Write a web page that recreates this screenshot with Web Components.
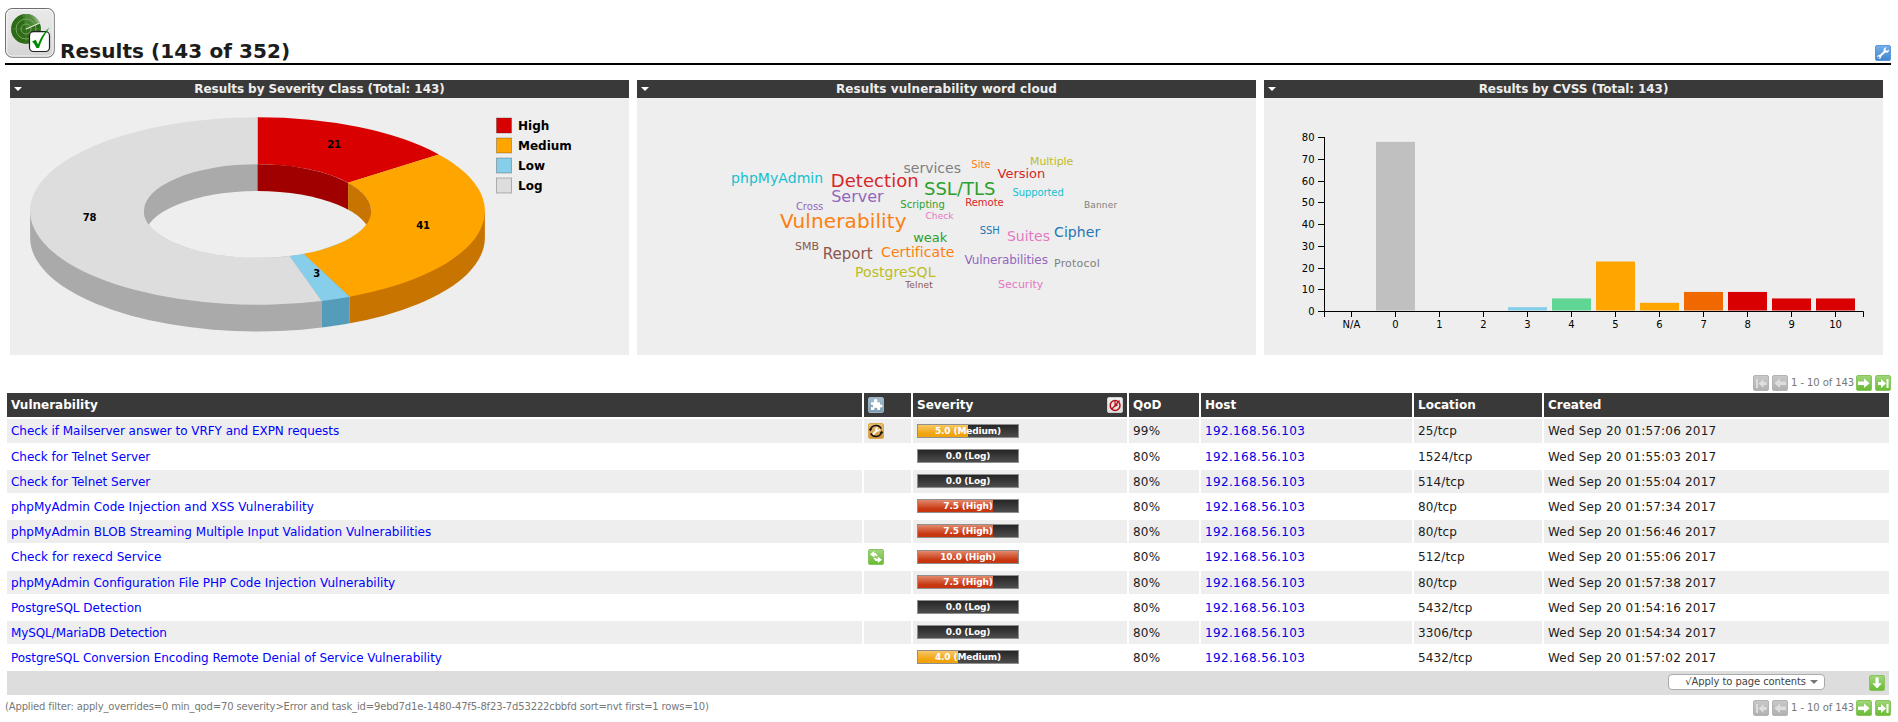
<!DOCTYPE html>
<html lang="en">
<head>
<meta charset="utf-8">
<title>Results</title>
<style>
html,body{margin:0;background:#fff}
body{width:1898px;height:722px;overflow:hidden;font-family:"DejaVu Sans",sans-serif;font-size:12px;color:#1c1c1c}
</style>
</head>
<body>
<results-page></results-page>
<script>
function define(name, render){
  customElements.define(name, class extends HTMLElement{
    connectedCallback(){
      if(this.shadowRoot) return;
      this.attachShadow({mode:'open'}).innerHTML = render(this);
    }
  });
}

/* ---- icons ---- */
const box = (a,b,s,inner) => `<defs><linearGradient id="g" x1="0" y1="0" x2="0" y2="1"><stop offset="0" stop-color="${a}"/><stop offset="1" stop-color="${b}"/></linearGradient></defs><rect x=".5" y=".5" width="15" height="15" rx="1.5" fill="url(#g)" stroke="${s}"/>${inner}`;
const green = i => box('#a2d67c','#68bb33','#86c65c',i);
const grey = i => box('#c9c9c9','#b0b0b0','#b4b4b4',i);
const right = 'M2 6.5H8V3.5L13.6 8.3 8 13V10H2Z';
const ICONS = {
  first: grey('<path d="M3 4h2v9H3zM13.5 7v3H10.5v3L5.5 8.5l5-4.6V7z" fill="#dedede"/>'),
  prev: grey('<path d="M14 6.5H8V3.5L2.4 8.3 8 13V10H14Z" fill="#dedede"/>'),
  next: green(`<path d="${right}" fill="#fff"/>`),
  last: green('<path d="M11.5 4h2v9h-2zM3 7v3h3v3l5-4.5-5-4.6V7z" fill="#fff"/>'),
  down: green('<path d="M6.5 2.5h3.2V8.3h3L8.1 13.6 3.4 8.3h3.1Z" fill="#fff"/>'),
  wrench: box('#78b0ea','#3f83d0','#5c97db','<path d="M4.800 11.300 10.600 5.800" stroke="#fff" stroke-width="1.900"/><path d="M14 4.500 11.900 6 10.300 4.400 11.500 2.200A3 3 0 0 0 8.600 4.900 2.500 2.500 0 0 0 11.300 7.700 3 3 0 0 0 14 4.500Z" fill="#fff"/><circle cx="4.300" cy="11.700" r="2" fill="#fff"/><path d="M2.400 13.600l1.900-1.900" stroke="#4a8bd4" stroke-width="1.300"/>'),
  puzzle: box('#a3bccd','#7e9db2','#9ab2c2','<path d="M3 5.2h3.2C5.3 3.2 6.3 2 7.6 2s2.5 1.2 1.5 3.2H12v2.6c1.700-.8 2.500.2 2.500 1.200s-.9 1.900-2.500 1.200V13H9.200c.6-1.700-.4-2.300-1.400-2.300S5.800 11.500 6.300 13H3v-2.900C5 10.600 5.200 9.800 5.200 9S4.500 7.600 3 8Z" fill="#fff"/>'),
  override: box('#f2f2f2','#dcdcdc','#d0d0d0','<circle cx="8.100" cy="8.500" r="4.900" fill="none" stroke="#b5121b" stroke-width="1.500"/><path d="M8 3.500V9M12.500 3.500 5 12M8.300 9.200l2.400-1.500" stroke="#b5121b" stroke-width="1.200" fill="none"/>'),
  vendorfix: box('#e8bd72','#d2963c','#dba852','<path d="M2.500 6.500A5.900 5.900 0 0 1 13.300 5.700M13.500 9.500A5.900 5.900 0 0 1 2.700 10.300" fill="none" stroke="#111" stroke-width="1.500"/><path d="M.8 5.800h3.600L2.200 8.600zM15.200 10.200h-3.600l2.200-2.800z" fill="#111"/><path d="M5 11.500 8.700 7.300" stroke="#fff" stroke-width="1.900"/><path d="M11.900 5.700 10.400 7 9 5.800l1.300-1.700A2.400 2.400 0 0 0 7.300 6a2.200 2.200 0 0 0 2.200 2.600 2.400 2.400 0 0 0 2.400-2.900Z" fill="#fff"/>'),
  mitigate: green('<path d="M2 5.300 6.300 2v2.200h1.500L9.600 6.400 8.600 7.600 7.200 6.500H6.300V8.500ZM14 10.800 9.800 14v-2H7.800L5.600 9.600 6.800 8.500 8.500 9.700H9.800V7.600Z" fill="#fff"/>')
};
define('gsa-icon', el => `<style>:host{display:block;width:16px;height:16px;flex:none}svg{display:block}</style><svg width="16" height="16" viewBox="0 0 16 16">${ICONS[el.getAttribute('name')]}</svg>`);

define('results-logo', () => `<style>:host{display:block;width:50px;height:50px;flex:none}svg{display:block}</style>
<svg width="50" height="50" viewBox="0 0 50 50"><defs>
<linearGradient id="b" x1="0" y1="0" x2="0" y2="1"><stop offset="0" stop-color="#e9e9e9"/><stop offset=".5" stop-color="#e3e3e3"/><stop offset="1" stop-color="#d2d2d2"/></linearGradient>
<linearGradient id="s" x1=".2" y1=".6" x2="1" y2=".2"><stop offset="0" stop-color="#3a7a22"/><stop offset=".55" stop-color="#5c9246"/><stop offset="1" stop-color="#cfe0c6"/></linearGradient></defs>
<rect x=".6" y=".6" width="48.600" height="48.600" rx="6.500" fill="url(#b)" stroke="#606060"/>
<rect x="1.700" y="1.700" width="46.400" height="46.400" rx="5.500" fill="none" stroke="#fafafa"/>
<circle cx="21" cy="21" r="15" fill="#2e6b17"/>
<path d="M21 21 17 6.600A15 15 0 0 1 34.800 15Z" fill="url(#s)"/>
<g fill="none" stroke="#86b072" stroke-width=".8"><circle cx="21" cy="21" r="5"/><circle cx="21" cy="21" r="10"/><path d="M6 21h30M21 6v30" stroke-opacity=".35"/></g>
<path d="M21 21 34.800 15" stroke="#dceacf" stroke-width="1.200"/>
<rect x="24.500" y="23.700" width="20" height="19.800" rx="4" fill="#fff" stroke="#222" stroke-width="1.200"/>
<path d="M27 33.500 30.800 31.800 33 36.500C36 29 39 24 44.500 19.500 40 26 36 33 34 40H31.500C30 37 29 35 27 33.500Z" fill="#008a00"/></svg>`);

/* ---- dashboard ---- */
define('dash-panel', el => `<style>
:host{display:block;width:619px;background:#eee}
header{display:flex;align-items:center;height:18px;background:#393939;color:#eee;font-weight:bold;line-height:14px}
i{width:0;border:4.500px solid transparent;border-top-color:#fff;border-bottom:0;margin:0 0 0 4px}
b{flex:1;text-align:center;margin-right:12px;position:relative;top:-.5px;letter-spacing:${el.getAttribute('track')}px}
.c{height:257px}</style>
<header><i></i><b>${el.getAttribute('heading')}</b></header><div class="c"><slot></slot></div>`);

define('severity-donut', () => {
  const cx=247.5, cy=113, RX=227.400, RY=93.700, rx=113.600, ry=46.800, H=26.800, T=143;
  const pt=(v,a,b)=>{const t=v/T*2*Math.PI;return (cx+a*Math.sin(t)).toFixed(2)+' '+(cy-b*Math.cos(t)).toFixed(2)};
  const data=[[0,21,'#d80000'],[21,62,'#ffa500'],[62,65,'#87ceeb'],[65,143,'#ddd']];
  const faces=data.map(([s,e,c])=>{const L=(e-s)/T>.5?1:0;
    return `<path fill="${c}" d="M${pt(s,RX,RY)}A${RX} ${RY} 0 ${L} 1 ${pt(e,RX,RY)}L${pt(e,rx,ry)}A${rx} ${ry} 0 ${L} 0 ${pt(s,rx,ry)}Z"/>`}).join('');
  const X=(v,a)=>cx+a*Math.sin(v/T*2*Math.PI);
  const m=X(62,RX), l=X(65,RX), h=X(21,rx);
  return `<style>:host{display:block}svg{display:block}text{font-family:"DejaVu Sans",sans-serif;font-weight:bold;fill:#000}.v{font-size:10px;text-anchor:middle;letter-spacing:-.3px}.l{font-size:12px}</style>
<svg width="619" height="257"><defs>
<clipPath id="o"><path d="M${cx-RX} ${cy}V${cy+H}A${RX} ${RY} 0 0 0 ${cx+RX} ${cy+H}V${cy}Z"/></clipPath>
<clipPath id="i"><ellipse cx="${cx}" cy="${cy}" rx="${rx}" ry="${ry}"/></clipPath></defs>
<g clip-path="url(#o)"><rect x="0" y="90" width="${l}" height="167" fill="#aaa"/><rect x="${l}" y="90" width="${m-l}" height="167" fill="#549cb9"/><rect x="${m}" y="90" width="200" height="167" fill="#c87400"/></g>
${faces}
<g clip-path="url(#i)"><rect x="100" y="50" width="${cx-100}" height="77" fill="#aaa"/><rect x="${cx}" y="50" width="${h-cx}" height="70" fill="#a00000"/><rect x="${h}" y="50" width="60" height="77" fill="#c87400"/><ellipse cx="${cx}" cy="${cy+H}" rx="${rx}" ry="${ry}" fill="#eee"/></g>
<text class="v" x="324" y="50">21</text><text class="v" x="413" y="131">41</text><text class="v" x="306.500" y="179">3</text><text class="v" x="79.500" y="123">78</text>
${[['High','#d80000'],['Medium','#ffa500'],['Low','#87ceeb'],['Log','#ddd']].map(([n,c],k)=>`<rect x="486.500" y="${20+k*20}" width="15" height="15" fill="${c}" stroke="#000" stroke-opacity=".25"/><text class="l" x="508" y="${32+k*20}">${n}</text>`).join('')}
</svg>`});

define('word-cloud', () => {
  const W=[['services',903,172.700,14,'#7f7f7f'],['Site',970.800,167.700,10,'#ff7f0e'],['Multiple',1029.500,165,11,'#bcbd22',-.05],['phpMyAdmin',730.500,183,14,'#17becf',.06],['Detection',830.300,187,18,'#d62728',.06],['Version',997,178,13,'#d62728'],['SSL/TLS',923.500,194.700,18,'#2ca02c'],['Supported',1012,196,10,'#17becf',-.1],['Server',830.700,202,16,'#9467bd'],['Remote',964.700,206,10,'#d62728'],['Scripting',899.800,208,10,'#2ca02c'],['Cross',795.400,210,10,'#9467bd'],['Banner',1083.500,208,9,'#7f7f7f',.15],['Check',925,219,9,'#e377c2',.08],['Vulnerability',779.500,228,20,'#ff7f0e',.13],['SSH',979.200,234,10,'#1f77b4',-.1],['Suites',1006.400,241,14,'#e377c2'],['Cipher',1053.600,237,14,'#1f77b4',.05],['weak',912.700,242,13,'#2ca02c'],['SMB',794.600,250,11,'#8c564b'],['Report',822.300,259,15,'#8c564b'],['Certificate',880.600,257,14,'#ff7f0e',.05],['Vulnerabilities',963.900,264,12,'#9467bd',-.1],['Protocol',1053.500,267,11,'#7f7f7f',.2],['PostgreSQL',854.500,277,14,'#bcbd22',.06],['Telnet',904.700,288,9,'#8c564b',.15],['Security',997.600,288,11,'#e377c2']];
  return `<style>:host{display:block}svg{display:block}text{font-family:"DejaVu Sans",sans-serif}</style><svg width="619" height="257">${W.map(([t,x,y,s,c,k=0])=>`<text x="${(x-636.5).toFixed(1)}" y="${Math.round(y)-98}" font-size="${s}" fill="${c}" letter-spacing="${k}">${t}</text>`).join('')}</svg>`});

define('cvss-bars', () => {
  const bars=[['N/A',0],['0',78,'#c0c0c0'],['1',0],['2',0],['3',2,'#87ceeb'],['4',6,'#5fd693'],['5',23,'#ffa500'],['6',4,'#ffa500'],['7',9,'#f06800'],['8',9,'#d80000'],['9',6,'#d80000'],['10',6,'#d80000']];
  const y0=213.500;
  let s='';
  bars.forEach(([n,v,c],k)=>{const x=87.400+k*44.020;
    if(v) s+=`<rect x="${Math.round(x-19.500)}" y="${y0-v*2.175}" width="39" height="${v*2.175-1}" fill="${c}"/>`;
    s+=`<rect x="${Math.round(x-.5)}" y="213" width="1" height="6"/><text x="${x.toFixed(1)}" y="230" text-anchor="middle">${n}</text>`});
  for(let v=0;v<=80;v+=10){const y=Math.floor(y0-v*2.175); s+=`<rect x="54" y="${y}" width="6" height="1"/><text x="50.500" y="${y+4}" text-anchor="end">${v}</text>`}
  return `<style>:host{display:block}svg{display:block}text{font:10px "DejaVu Sans",sans-serif}</style><svg width="619" height="257">${s}<path d="M60.500 39V219M60 213.500H599.500V219" fill="none" stroke="#000"/></svg>`});

/* ---- table ---- */
define('severity-bar', el => {const v=+el.getAttribute('value'), c=v>=7?['#e2886c','#c8360f']:['#f8c765','#f0a30c'];
  return `<style>:host{display:block;width:102px;height:14px;box-sizing:border-box;border:1px solid #8f8f8f;
background:linear-gradient(${c[0]},${c[1]} 75%) 0 0/${v*10}% 100% no-repeat,linear-gradient(#262626,#4c4c4c);
color:#fff;font-weight:bold;font-size:9px;line-height:12px;text-align:center;white-space:nowrap;letter-spacing:-.13px}</style>${v.toFixed(1)} (${el.getAttribute('level')})`});

const cols='grid-template-columns:855px 47px 214px 70px 211px 128px 345px;column-gap:2px;';
define('result-row', el => {
  const d=el.getAttribute('data').split('|'), tall=!!d[1], odd=el.hasAttribute('odd');
  return `<style>:host{display:grid;${cols}height:${tall?24:23}px}
div{background:${odd?'#eee':'#fff'};padding:5px 4px 0;line-height:14px;white-space:nowrap}
div.i{padding-top:4px}div.s{padding-top:${tall?5:4}px}a{color:#00f;letter-spacing:${d[7]||0}px}a.h{color:#0000e6;letter-spacing:.34px}.n{letter-spacing:.12px}.q,.d{letter-spacing:.19px}</style>
<div><a>${d[0]}</a></div><div class="i">${d[1]?`<gsa-icon name="${d[1]}"></gsa-icon>`:''}</div><div class="s"><severity-bar value="${d[2]}" level="${d[3]}"></severity-bar></div><div class="q">${d[4]}%</div><div><a class="h">192.168.56.103</a></div><div class="n">${d[5]}/tcp</div><div class="d">Wed Sep 20 01:${d[6]} 2017</div>`});

define('results-table', () => {
  const rows=['Check if Mailserver answer to VRFY and EXPN requests|vendorfix|5|Medium|99|25|57:06|-.035','Check for Telnet Server||0|Log|80|1524|55:03|-.03','Check for Telnet Server||0|Log|80|514|55:04|-.03','phpMyAdmin Code Injection and XSS Vulnerability||7.5|High|80|80|57:34|.045','phpMyAdmin BLOB Streaming Multiple Input Validation Vulnerabilities||7.5|High|80|80|56:46|.027','Check for rexecd Service|mitigate|10|High|80|512|55:06|.04','phpMyAdmin Configuration File PHP Code Injection Vulnerability||7.5|High|80|80|57:38|.01','PostgreSQL Detection||0|Log|80|5432|54:16','MySQL/MariaDB Detection||0|Log|80|3306|54:34|-.1','PostgreSQL Conversion Encoding Remote Denial of Service Vulnerability||4|Medium|80|5432|57:02|-.035'];
  return `<style>:host{display:flex;flex-direction:column;gap:2px;width:1882px}
.h{display:grid;${cols}height:24px;color:#fff;font-weight:bold;line-height:14px}
.h div{background:#393939;padding:5px 4px 0;display:flex;justify-content:space-between}
.h gsa-icon{margin-top:-1px}
.f{display:flex;justify-content:flex-end;background:#ddd;height:24px;box-sizing:border-box;padding:3px 4px 0 0}
.sel{box-sizing:border-box;width:157px;height:16px;border:1px solid #aaa;border-radius:4px;background:#fff;font-size:10px;line-height:14px;color:#444;display:flex;justify-content:flex-end;align-items:center;padding-right:6px;margin-right:44px;white-space:nowrap;letter-spacing:-.08px}
.sel i{border:4px solid transparent;border-top-color:#777;border-bottom:0;margin-left:4px}
.f gsa-icon{margin-top:1px}</style>
<div class="h"><div>Vulnerability</div><div><gsa-icon name="puzzle"></gsa-icon></div><div>Severity<gsa-icon name="override"></gsa-icon></div><div>QoD</div><div>Host</div><div>Location</div><div>Created</div></div>
${rows.map((r,k)=>`<result-row ${k%2?'':'odd'} data="${r}"></result-row>`).join('')}
<div class="f"><div class="sel">√Apply to page contents<i></i></div><gsa-icon name="down"></gsa-icon></div>`});

define('page-nav', () => `<style>:host{display:flex;height:16px;font-size:10px;line-height:15px;color:#777;white-space:nowrap}.a{margin-right:3px}span{box-sizing:border-box;width:68px;padding-left:3px;letter-spacing:-.08px}</style>
<gsa-icon class="a" name="first"></gsa-icon><gsa-icon name="prev"></gsa-icon><span>1 - 10 of 143</span><gsa-icon class="a" name="next"></gsa-icon><gsa-icon name="last"></gsa-icon>`);

define('results-page', () => `<style>
:host{display:block;padding-top:8px}
.head{display:flex;width:1886px;height:55px;margin-left:5px;border-bottom:2px solid #000}
h1{margin:0;flex:1;padding:31px 0 0 5px;font-size:20px;line-height:24px;letter-spacing:.09px}
.head>gsa-icon{margin-top:37px}
.dash{display:flex;gap:8px;margin:15px 0 0 10px}
.nav{display:flex;justify-content:flex-end;padding-right:7px}
.top{margin:20px 0 2px}
results-table{margin-left:7px}
.foot{display:flex;justify-content:space-between;padding:0 7px 0 5px;margin-top:5px;font-size:10px;line-height:13px;color:#777}
.foot span{letter-spacing:-.152px}
</style>
<div class="head"><results-logo></results-logo><h1>Results (143 of 352)</h1><gsa-icon name="wrench"></gsa-icon></div>
<div class="dash"><dash-panel track="-.06" heading="Results by Severity Class (Total: 143)"><severity-donut></severity-donut></dash-panel><dash-panel track=".07" heading="Results vulnerability word cloud"><word-cloud></word-cloud></dash-panel><dash-panel track="-.07" heading="Results by CVSS (Total: 143)"><cvss-bars></cvss-bars></dash-panel></div>
<div class="nav top"><page-nav></page-nav></div>
<results-table></results-table>
<div class="foot"><span>(Applied filter: apply_overrides=0 min_qod=70 severity&gt;Error and task_id=9ebd7d1e-1480-47f5-8f23-7d53222cbbfd sort=nvt first=1 rows=10)</span><page-nav></page-nav></div>`);
</script>
</body>
</html>
